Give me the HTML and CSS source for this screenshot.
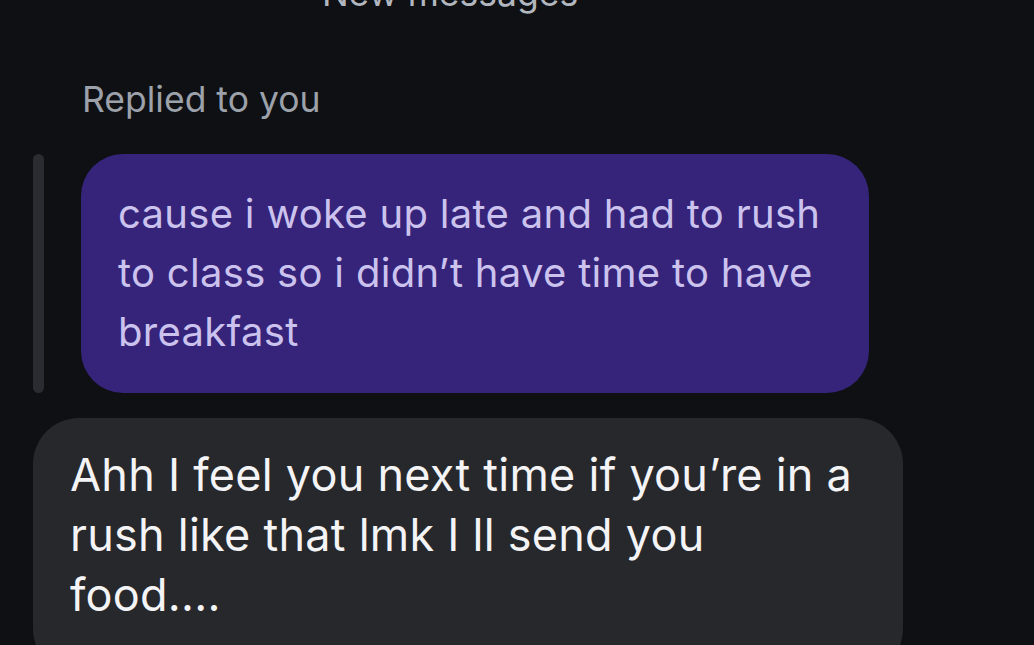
FILE: index.html
```html
<!DOCTYPE html>
<html lang="en">
<head>
<meta charset="utf-8">
<title>Chat</title>
<link rel="stylesheet" href="styles.css">
</head>
<body>
<div class="screen">
  <div class="divider">New messages</div>
  <div class="reply-label">Replied to you</div>
  <div class="quote">
    <div class="quote-bar"></div>
    <div class="bubble bubble-mine">cause i woke up late and had to rush<br>to class so i didn’t have time to have<br>breakfast</div>
  </div>
  <div class="bubble bubble-theirs">Ahh I feel you next time if you’re in a<br>rush like that lmk I ll send you<br>food....</div>
</div>
</body>
</html>
```
FILE: styles.css
```css
html, body {
  margin: 0;
  padding: 0;
  background: #0e1014;
  overflow: hidden;
}
.screen {
  width: 1034px;
  height: 645px;
  font-family: Inter, "Noto Sans", sans-serif;
  display: flex;
  flex-direction: column;
  align-items: flex-start;
}
.divider {
  align-self: stretch;
  text-align: center;
  color: #b2b6be;
  font-size: 35.5px;
  line-height: 40px;
  margin-top: -26px;
  padding-right: 134px;
}
.reply-label {
  color: #9ca1aa;
  font-size: 35.5px;
  line-height: 40px;
  margin-top: 66px;
  margin-left: 82px;
}
.quote {
  display: flex;
  gap: 37px;
  margin-top: 34px;
  margin-left: 33px;
}
.quote-bar {
  width: 11px;
  border-radius: 6px;
  background: #2a2c31;
}
.bubble {
  border-radius: 42px;
}
.bubble-mine {
  width: 788px;
  box-sizing: border-box;
  height: 239px;
  padding: 30px 37px;
  background: #35247a;
  color: #cbc3ee;
  font-size: 40px;
  letter-spacing: 0.3px;
  line-height: 59px;
}
.bubble-theirs {
  margin-top: 25px;
  margin-left: 33px;
  width: 870px;
  box-sizing: border-box;
  padding: 27px 37px 50px;
  background: #26282c;
  color: #f4f4f6;
  font-size: 45px;
  letter-spacing: 0.25px;
  line-height: 60px;
  border-radius: 46px;
}
```
